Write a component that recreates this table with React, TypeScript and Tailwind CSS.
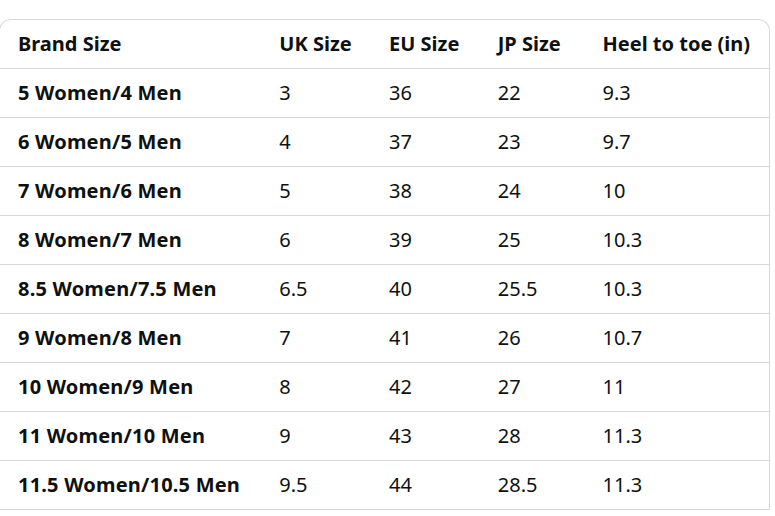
const rows = [
  ['5 Women/4 Men', '3', '36', '22', '9.3'],
  ['6 Women/5 Men', '4', '37', '23', '9.7'],
  ['7 Women/6 Men', '5', '38', '24', '10'],
  ['8 Women/7 Men', '6', '39', '25', '10.3'],
  ['8.5 Women/7.5 Men', '6.5', '40', '25.5', '10.3'],
  ['9 Women/8 Men', '7', '41', '26', '10.7'],
  ['10 Women/9 Men', '8', '42', '27', '11'],
  ['11 Women/10 Men', '9', '43', '28', '11.3'],
  ['11.5 Women/10.5 Men', '9.5', '44', '28.5', '11.3'],
]

const headers = ['Brand Size', 'UK Size', 'EU Size', 'JP Size', 'Heel to toe (in)']
const widths = ['w-[262px]', 'w-[110px]', 'w-[109px]', 'w-[105px]', 'w-[185px]']

export default function App() {
  return (
    <div className="bg-white w-[775px] h-[516px] pt-[19px] text-[#0f1111] font-['Noto_Sans',sans-serif] overflow-hidden">
      <div className="ml-[-1px] w-[771px] border border-[#d5d9d9] rounded-t-[12px] border-b-0">
        <div className="flex h-[49px] items-center border-b border-[#d5d9d9] font-bold text-[20px]">
          {headers.map((h, i) => (
            <div key={h} className={`${widths[i]} pl-[18px]`}>{h}</div>
          ))}
        </div>
        {rows.map((r) => (
          <div key={r[0]} className="flex h-[49px] items-center border-b border-[#d5d9d9] text-[20px]">
            {r.map((c, i) => (
              <div key={i} className={`${widths[i]} pl-[18px] ${i === 0 ? 'font-bold tracking-[0.01em]' : ''}`}>{c}</div>
            ))}
          </div>
        ))}
      </div>
    </div>
  )
}
